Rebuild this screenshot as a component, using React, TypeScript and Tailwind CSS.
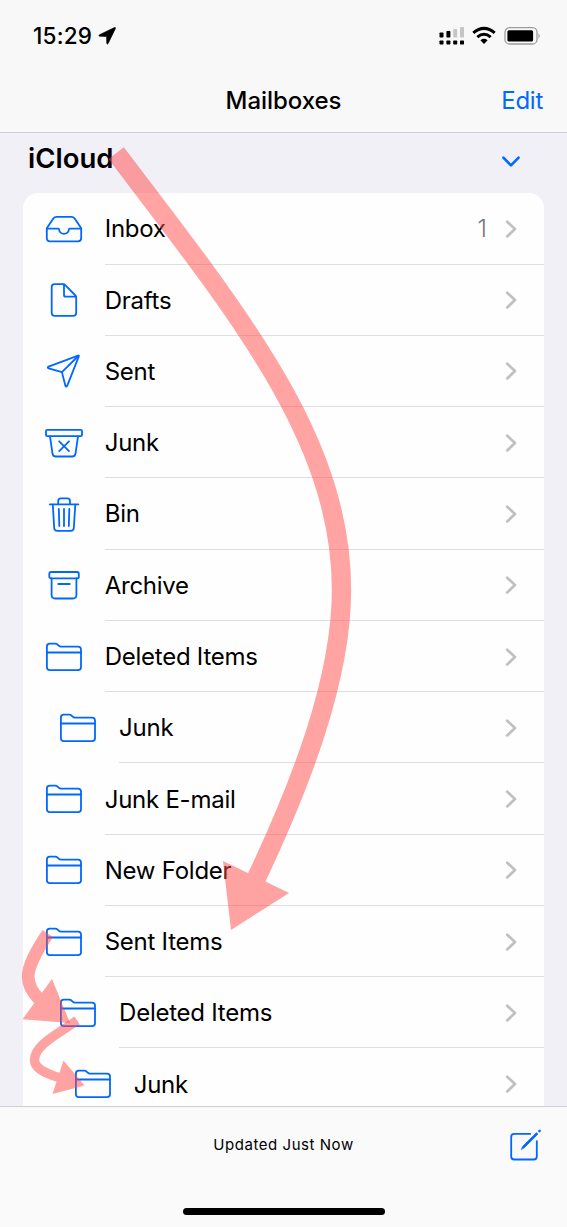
import React from 'react';

type IconName = 'inbox' | 'draft' | 'sent' | 'junk' | 'bin' | 'archive' | 'folder';

interface Mailbox {
  name: string;
  icon: IconName;
  level?: number;
  count?: number;
}

const mailboxes: Mailbox[] = [
  { name: 'Inbox', icon: 'inbox', count: 1 },
  { name: 'Drafts', icon: 'draft' },
  { name: 'Sent', icon: 'sent' },
  { name: 'Junk', icon: 'junk' },
  { name: 'Bin', icon: 'bin' },
  { name: 'Archive', icon: 'archive' },
  { name: 'Deleted Items', icon: 'folder' },
  { name: 'Junk', icon: 'folder', level: 1 },
  { name: 'Junk E-mail', icon: 'folder' },
  { name: 'New Folder', icon: 'folder' },
  { name: 'Sent Items', icon: 'folder' },
  { name: 'Deleted Items', icon: 'folder', level: 1 },
  { name: 'Junk', icon: 'folder', level: 2 },
];

const indents = ['pl-[21px]', 'pl-[35.4px]', 'pl-[50px]'];

const iconPaths: Record<IconName, React.ReactNode> = {
  inbox: (
    <>
      <path d="M2.8 19.3 L9.3 9.6 Q10.5 7.9 12.6 7.9 H27.4 Q29.5 7.9 30.7 9.6 L37.2 19.3 V29 Q37.2 32.3 33.9 32.3 H6.1 Q2.8 32.3 2.8 29 Z" />
      <path d="M2.8 19.6 H14 Q15.2 19.6 15.2 20.8 A4.8 4 0 0 0 24.8 20.8 Q24.8 19.6 26 19.6 H37.2" />
    </>
  ),
  draft: (
    <>
      <path d="M10.5 4.2 H19 Q20.2 4.2 21.2 5.2 L31 15 Q32.2 16.2 32.2 17.6 V32.8 Q32.2 35.9 29.1 35.9 H10.8 Q7.7 35.9 7.7 32.8 V7.2 Q7.7 4.2 10.5 4.2 Z" />
      <path d="M20 4.4 V15 Q20 16.7 21.7 16.7 H32" />
    </>
  ),
  sent: (
    <>
      <path d="M34 4.6 L4.6 15.6 Q2.8 16.5 4.7 17.3 L17.9 21.1 L21.4 34.8 Q22.2 36.5 23.2 34.8 L34.8 5.4 Q35.2 4.2 34 4.6 Z" />
      <path d="M17.9 21.1 L34.3 5" />
    </>
  ),
  junk: (
    <>
      <rect x="2" y="6.9" width="36" height="6.2" rx="1.2" />
      <path d="M6 13.3 L8.5 30.6 Q8.9 33.5 11.8 33.5 H28.2 Q31.1 33.5 31.5 30.6 L34 13.3" />
      <path d="M15.2 18.3 L25 28.1 M25 18.3 L15.2 28.1" />
    </>
  ),
  bin: (
    <>
      <path d="M5.8 10.4 H34.4" />
      <path d="M14.2 10.2 V7 Q14.2 4.4 16.8 4.4 H23.4 Q26 4.4 26 7 V10.2" />
      <path d="M8.8 10.6 L10.2 34 Q10.4 36.9 13.3 36.9 H26.7 Q29.6 36.9 29.8 34 L31.3 10.6" />
      <path d="M14.8 15 L15.3 32 M20 15 V32 M25.3 15 L24.8 32" />
    </>
  ),
  archive: (
    <>
      <rect x="5.3" y="7" width="29.5" height="6.4" rx="1.7" />
      <path d="M7.6 13.5 V30 Q7.6 33.5 11.1 33.5 H28.9 Q32.4 33.5 32.4 30 V13.5" />
      <path d="M14.3 19 H25.7" />
    </>
  ),
  folder: (
    <>
      <path d="M2.9 9.5 Q2.9 6.7 5.8 6.7 H11.3 Q12.7 6.7 13.8 7.8 L14.7 8.7 Q15.6 9.7 17 9.7 H34 Q37 9.7 37 12.6 V30.2 Q37 33.1 34 33.1 H5.8 Q2.9 33.1 2.9 30.2 Z" />
      <path d="M2.9 15.5 H37" />
    </>
  ),
};

const MailboxIcon: React.FC<{ name: IconName }> = ({ name }) => (
  <svg
    className="w-10 h-10 shrink-0 text-[#0068ff]"
    viewBox="0 0 40 40"
    fill="none"
    stroke="currentColor"
    strokeWidth="1.8"
    strokeLinecap="round"
    strokeLinejoin="round"
  >
    {iconPaths[name]}
  </svg>
);

const MailboxRow: React.FC<{ mailbox: Mailbox }> = ({ mailbox }) => (
  <div className={`flex h-[71.27px] shrink-0 items-center ${indents[mailbox.level ?? 0]}`}>
    <MailboxIcon name={mailbox.icon} />
    <div className="ml-[20.7px] flex h-full flex-1 items-center border-b border-[#dfdfe1] pt-px pr-[26px]">
      <span className="flex-1 pt-px text-[24px] tracking-[-0.25px] text-black">{mailbox.name}</span>
      {mailbox.count && <span className="mr-[17px] pt-px text-[24px] font-light text-[#77777b]">{mailbox.count}</span>}
      <svg className="h-5 w-[14px]" viewBox="0 0 14 20" fill="none" stroke="#c0c0c2" strokeWidth="2.7" strokeLinecap="round" strokeLinejoin="round">
        <path d="M3.2 2.7 L11 10 L3.2 17.4" />
      </svg>
    </div>
  </div>
);

const StatusBar = () => (
  <div className="flex h-[72px] items-center justify-between pl-[33px] pr-[26px]">
    <div className="flex items-center gap-[6px]">
      <span className="text-[22.5px] font-medium tracking-[0.2px]">15:29</span>
      <svg className="h-[18px] w-[18px]" viewBox="0 0 18 18">
        <path d="M16.6 0.5 Q17.8 0.2 17.4 1.5 L10.1 16.5 Q9 18 8.8 16 L8.6 9.4 L2 9.2 Q0 9 1.5 7.8 Z" stroke="black" strokeWidth="0.7" />
      </svg>
    </div>
    <svg className="h-5 w-[103px]" viewBox="0 0 103 20">
      <g>
        <rect x="1.5" y="6.5" width="4" height="5" rx="0.7" />
        <rect x="8.4" y="5" width="4" height="6.5" rx="0.7" />
        <rect x="15.2" y="3" width="4" height="8.5" rx="0.7" fill="#c4c5c6" />
        <rect x="22" y="1" width="4" height="10.5" rx="0.7" fill="#c4c5c6" />
        <rect x="1.5" y="14.5" width="4" height="4" rx="0.7" />
        <rect x="8.4" y="14.5" width="4" height="4" rx="0.7" />
        <rect x="15.2" y="14.5" width="4" height="4" rx="0.7" />
        <rect x="22" y="14.5" width="4" height="4" rx="0.7" />
      </g>
      <g fill="none" stroke="black" strokeWidth="3">
        <path d="M35.3 6.9 Q46 -2.2 56.7 6.9" />
        <path d="M39.3 11.2 Q46 5.4 52.7 11.2" />
      </g>
      <path d="M42.4 14.3 Q46 11.4 49.6 14.3 L46 17.9 Z" />
      <rect x="67" y="1.7" width="32" height="16.3" rx="4.6" fill="none" stroke="#9b9c9d" strokeWidth="1.3" />
      <rect x="69.4" y="4.2" width="25.7" height="11.3" rx="1.6" />
      <path d="M100.5 7.3 Q102.9 10 100.5 12.7 Z" fill="#9b9c9d" />
    </svg>
  </div>
);

/* Hand drawn hints that lead from the account to the nested folders */
const Arrows = () => (
  <svg className="pointer-events-none absolute inset-0 h-[1227px] w-[567px]" viewBox="0 0 567 1227" fill="none">
    <g opacity="0.5" stroke="#ff4848">
      <path d="M116.2 153.2 C240 316 341.5 440 341.5 590 C341.5 680 300 786 256 879" strokeWidth="19.3" />
      <path d="M223 861 L289 893 L231 930 Z" fill="#ff4848" stroke="none" />
    </g>
    <g opacity="0.5" stroke="#ff4848">
      <path d="M47.8 933.5 C37 950 28 965 28.2 977 C28.4 987 33 993 39 999" strokeWidth="12.7" />
      <path d="M52 979 L70 1023 L22.5 1019.3 Z" fill="#ff4848" stroke="none" />
    </g>
    <g opacity="0.5" stroke="#ff4848">
      <path d="M77.2 1020.5 C54 1036 34.5 1046 34.5 1060 C34.5 1068 46 1074 60 1077.7" strokeWidth="9.4" />
      <path d="M63.5 1060.5 L84.5 1085.5 L52.5 1094 Z" fill="#ff4848" stroke="none" />
    </g>
  </svg>
);

const App: React.FC = () => {
  return (
    <div className="relative flex h-[1227px] w-[567px] flex-col overflow-hidden bg-[#f1f0f6] font-['Inter','Liberation_Sans',sans-serif] text-black">
      {/* Navigation bar */}
      <header className="h-[133px] shrink-0 border-b border-[#cfcfd1] bg-[#f8f8f8]">
        <StatusBar />
        <div className="grid grid-cols-3 items-center px-[24px] pt-[11px]">
          <span />
          <h1 className="text-center text-[24px] font-medium leading-9 tracking-[-0.05px]">Mailboxes</h1>
          <button className="text-right text-[24px] leading-9 tracking-[-0.25px] text-[#0068ff]">Edit</button>
        </div>
      </header>

      {/* Mailbox list */}
      <main className="flex min-h-0 flex-1 flex-col overflow-hidden px-[23px]">
        <div className="flex h-[60.3px] shrink-0 items-center justify-between pl-[5px] pr-[23px]">
          <h2 className="pb-[11px] text-[27.5px] font-[580] leading-8">iCloud</h2>
          <svg className="mt-[-4px] h-5 w-5" viewBox="0 0 20 20" fill="none" stroke="#0068ff" strokeWidth="2.6" strokeLinecap="round" strokeLinejoin="round">
            <path d="M2.4 6.6 L10 14.4 L17.6 6.6" />
          </svg>
        </div>
        <div className="flex shrink-0 flex-col rounded-t-[15px] bg-[#fefefe]">
          {mailboxes.map((mailbox, i) => (
            <MailboxRow key={i} mailbox={mailbox} />
          ))}
        </div>
      </main>

      {/* Toolbar */}
      <footer className="flex h-[121.5px] shrink-0 flex-col items-center justify-between border-t border-[#cfcfd1] bg-[#fafafa] pb-[12px]">
        <div className="grid w-full grid-cols-[1fr_auto_1fr] items-center pl-[25px] pr-[25px] pt-[18px]">
          <span />
          <span className="pt-[5px] text-[15px] tracking-[0.55px]">Updated Just Now</span>
          <svg className="h-9 w-9 justify-self-end" viewBox="0 0 36 36" fill="none" stroke="#0068ff" strokeLinecap="round" strokeLinejoin="round">
            <path d="M24.2 8.9 H8.2 Q5.2 8.9 5.2 11.9 V31.5 Q5.2 34.5 8.2 34.5 H27.8 Q30.8 34.5 30.8 31.5 V16.1" strokeWidth="1.8" />
            <path d="M15.5 24.1 L17 21 L30.5 7.7 L31.9 9 L18.5 22.5 Z" fill="#0068ff" strokeWidth="0.8" />
            <path d="M33.3 6.2 L33.7 5.8" strokeWidth="2.4" />
          </svg>
        </div>
        <div className="h-[7px] w-[202px] rounded-full bg-black" />
      </footer>

      <Arrows />
    </div>
  );
};

export default App;
